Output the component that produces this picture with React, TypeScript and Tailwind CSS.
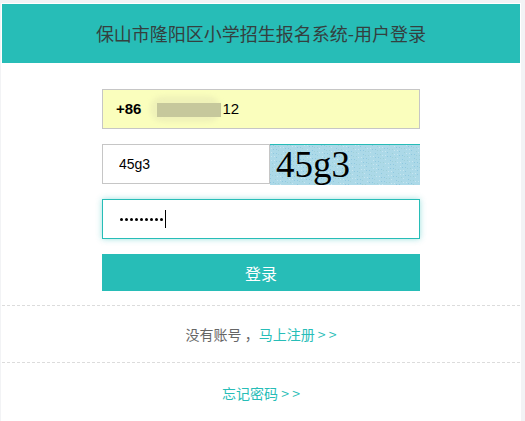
import { useState } from "react";

const noise = Array.from({ length: 600 }, (_, i) => {
  const x = (i * 37) % 150;
  const y = (i * 53) % 41;
  return { x, y, c: i % 3 === 0 ? "#8fc8e0" : i % 3 === 1 ? "#c8e6f0" : "#9fd0d8" };
});

function Captcha() {
  return (
    <div className="relative h-[41px] w-[150px] overflow-hidden border-t border-[#26bcb7] bg-[#acd9e8]">
      <svg className="absolute inset-0" width="150" height="41">
        {noise.map((p, i) => (
          <rect key={i} x={p.x} y={p.y} width="1" height="1" fill={p.c} />
        ))}
      </svg>
      <span className="absolute left-[6px] top-[-4px] font-['Liberation_Serif',serif] text-[37px] leading-[48px] text-black">
        45g3
      </span>
    </div>
  );
}

export default function App() {
  const [code, setCode] = useState("45g3");
  const dots = Array.from({ length: 9 });

  return (
    <div className="h-[421px] w-[525px] overflow-hidden bg-[#f2f3f5] font-['Microsoft_YaHei','Noto_Sans_CJK_SC',sans-serif]">
      <div className="ml-[1px] mt-[3px] h-[420px] w-[520px] bg-white p-[1px]">
        <div className="flex h-[59px] items-center justify-center bg-[#27bdb7] text-[18px] text-[#34403f]">
          保山市隆阳区小学招生报名系统-用户登录
        </div>

        <form className="mx-auto mt-[26px] flex w-[318px] flex-col" onSubmit={(e) => e.preventDefault()}>
          <div className="flex h-[40px] items-center border border-[#c6c6c6] bg-[#fafebd] pl-[13px] font-['Liberation_Sans',sans-serif] text-[15px] text-black">
            <span className="font-bold">+86</span>
            <span className="relative ml-[9px] h-[26px] w-[71px]">
              <span className="absolute inset-0 rounded-full bg-[#eff2b8] blur-[2px]" />
              <span className="absolute left-[7px] top-[7px] h-[14px] w-[64px] bg-[#c6c89c] blur-[0.5px]" />
            </span>
            <span className="ml-[1px]">12</span>
          </div>

          <div className="mt-[15px] flex h-[41px]">
            <input
              value={code}
              onChange={(e) => setCode(e.target.value)}
              className="h-[40px] w-[168px] border border-[#c6c6c6] bg-white pl-[16px] font-['Liberation_Sans',sans-serif] text-[14px] text-black outline-none"
            />
            <Captcha />
          </div>

          <div className="mt-[14px] flex h-[40px] items-center border border-[#27bdb7] bg-white pl-[17px] shadow-[0_0_6px_rgba(39,189,183,0.45)]">
            <div className="flex items-center gap-[2px]">
              {dots.map((_, i) => (
                <span key={i} className="h-[3px] w-[3px] rounded-full bg-black" />
              ))}
            </div>
            <span className="ml-[2px] h-[18px] w-[1px] bg-black" />
          </div>

          <button
            type="submit"
            className="mt-[15px] h-[37px] w-full bg-[#27bdb7] text-[16px] text-white"
          >
            登录
          </button>
        </form>

        <div className="mt-[14px] border-t border-dashed border-[#dcdcdc]" />
        <div className="flex h-[56px] items-center justify-center text-[14px] text-[#666]">
          没有账号 ，
          <a href="#" className="text-[#27bdb7]">
            马上注册 &gt; &gt;
          </a>
        </div>
        <div className="border-t border-dashed border-[#dcdcdc]" />
        <div className="flex h-[60px] items-center justify-center text-[14px]">
          <a href="#" className="text-[#27bdb7]">
            忘记密码 &gt; &gt;
          </a>
        </div>
      </div>
    </div>
  );
}
